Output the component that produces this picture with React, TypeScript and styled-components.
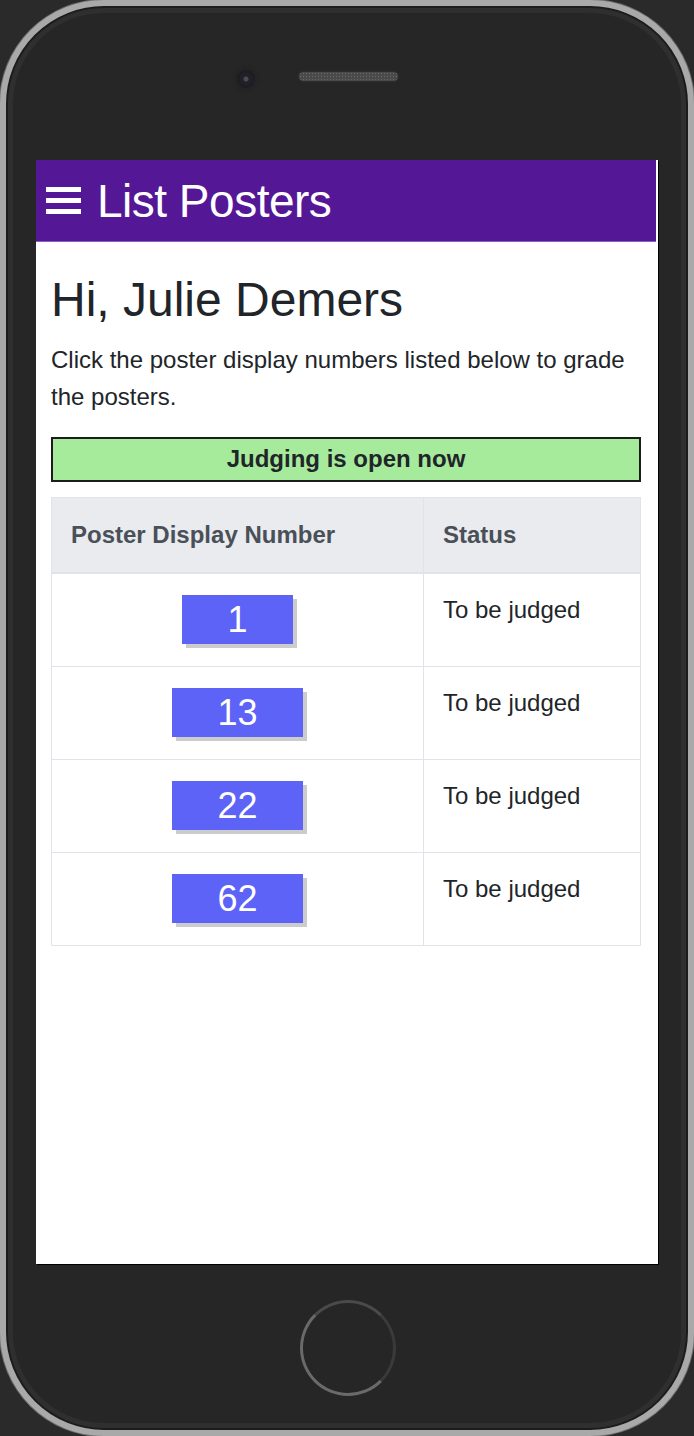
import React from 'react';
import styled, { createGlobalStyle } from 'styled-components';

const posters = [
  { num: '1', status: 'To be judged' },
  { num: '13', status: 'To be judged' },
  { num: '22', status: 'To be judged' },
  { num: '62', status: 'To be judged' },
];

function App() {
  return (
    <>
      <GlobalStyle />
      <Phone>
        <TopBezel>
          <Camera />
          <Speaker />
          <span />
        </TopBezel>
        <Screen>
          <AppBar>
            <Burger>
              <span />
              <span />
              <span />
            </Burger>
            <Title>List Posters</Title>
          </AppBar>
          <Content>
            <Greeting>Hi, Julie Demers</Greeting>
            <Intro>
              Click the poster display numbers listed below to grade the
              posters.
            </Intro>
            <Notice>Judging is open now</Notice>
            <PosterTable>
              <thead>
                <tr>
                  <th style={{ width: 372 }}>Poster Display Number</th>
                  <th>Status</th>
                </tr>
              </thead>
              <tbody>
                {posters.map((p) => (
                  <tr key={p.num}>
                    <NumCell>
                      <NumButton type="button">{p.num}</NumButton>
                    </NumCell>
                    <td>{p.status}</td>
                  </tr>
                ))}
              </tbody>
            </PosterTable>
          </Content>
        </Screen>
        <BottomBezel>
          <HomeButton />
        </BottomBezel>
      </Phone>
    </>
  );
}

const GlobalStyle = createGlobalStyle`
  html, body {
    margin: 0;
    padding: 0;
    background: #2a2a2a;
  }
  * {
    box-sizing: border-box;
  }
`;

const Phone = styled.div`
  width: 694px;
  height: 1436px;
  border: 6px solid #a9a9a9;
  border-radius: 104px;
  background: #262626;
  box-shadow: inset 0 0 0 2px #1c1c1c, inset 0 0 0 7px #2f2f2f,
    0 0 0 1px #6e6e6e;
  padding: 0 30px;
  display: flex;
  flex-direction: column;
`;

const TopBezel = styled.div`
  height: 154px;
  display: grid;
  grid-template-columns: 1fr auto 1fr;
  align-items: start;
  padding-top: 66px;
`;

const Camera = styled.div`
  justify-self: end;
  margin-right: 42px;
  margin-top: -2px;
  width: 18px;
  height: 18px;
  border-radius: 50%;
  background: radial-gradient(circle, #4a4a55 0 2px, #202026 3px 6px, #1d1c22 7px);
  box-shadow: 0 0 5px #1c1b20;
`;

const Speaker = styled.div`
  width: 99px;
  height: 9px;
  margin-left: 2px;
  border-radius: 5px;
  background-color: #4a4a4a;
  background-image: radial-gradient(#6a6a6a 0.8px, transparent 1px);
  background-size: 3px 3px;
  box-shadow: 0 0 3px #3a3a3a;
`;

const Screen = styled.div`
  height: 1104px;
  background: #ffffff;
  box-shadow: 1px 1px 0 #000000;
  display: flex;
  flex-direction: column;
  font-family: 'Liberation Sans', Arial, sans-serif;
  color: #212529;
`;

const AppBar = styled.header`
  height: 82px;
  flex: none;
  background: #541796;
  border-bottom: 1px solid #8b5fc2;
  display: flex;
  align-items: center;
  gap: 16px;
  padding-left: 10px;
  margin-right: 2px;
`;

const Burger = styled.div`
  width: 35px;
  display: flex;
  flex-direction: column;
  gap: 6px;
  span {
    display: block;
    height: 5px;
    background: #ffffff;
  }
`;

const Title = styled.h2`
  margin: 0;
  color: #ffffff;
  font-size: 46px;
  font-weight: 400;
  letter-spacing: -0.5px;
`;

const Content = styled.main`
  padding: 0 17px 0 15px;
`;

const Greeting = styled.h1`
  margin: 29px 0 12px;
  font-size: 48px;
  font-weight: 400;
  line-height: 1.2;
`;

const Intro = styled.p`
  margin: 0 0 22px;
  font-size: 24px;
  line-height: 37px;
`;

const Notice = styled.div`
  height: 45px;
  border: 2px solid #1d1d1d;
  background: #a6eb9b;
  display: flex;
  align-items: center;
  justify-content: center;
  font-size: 24px;
  font-weight: 700;
  margin-bottom: 15px;
`;

const PosterTable = styled.table`
  width: 100%;
  border-collapse: collapse;
  font-size: 24px;
  th,
  td {
    border: 1px solid #e0e3e7;
    text-align: left;
    vertical-align: top;
    padding: 22px 19px;
  }
  th {
    height: 76px;
    background: #e9ebef;
    color: #495057;
    font-weight: 700;
    font-size: 24px;
    vertical-align: middle;
    border-bottom-width: 2px;
  }
  tbody tr {
    height: 93px;
  }
`;

const NumCell = styled.td`
  && {
    text-align: center;
    padding-top: 21px;
  }
`;

const NumButton = styled.button`
  appearance: none;
  border: none;
  border-radius: 0;
  padding: 0 45px;
  height: 49px;
  background: #5d63f7;
  color: #ffffff;
  font-family: 'Liberation Sans', Arial, sans-serif;
  font-size: 36px;
  line-height: 49px;
  box-shadow: 4px 4px 0 #cccccc;
  cursor: pointer;
`;

const BottomBezel = styled.div`
  flex: 1;
  display: flex;
  justify-content: center;
  padding-top: 36px;
  padding-left: 2px;
`;

const HomeButton = styled.div`
  width: 96px;
  height: 96px;
  border-radius: 50%;
  border: 3px solid #6a6a6a;
  border-top-color: #4a4a4a;
  border-right-color: #3a3a3a;
`;

export default App;
